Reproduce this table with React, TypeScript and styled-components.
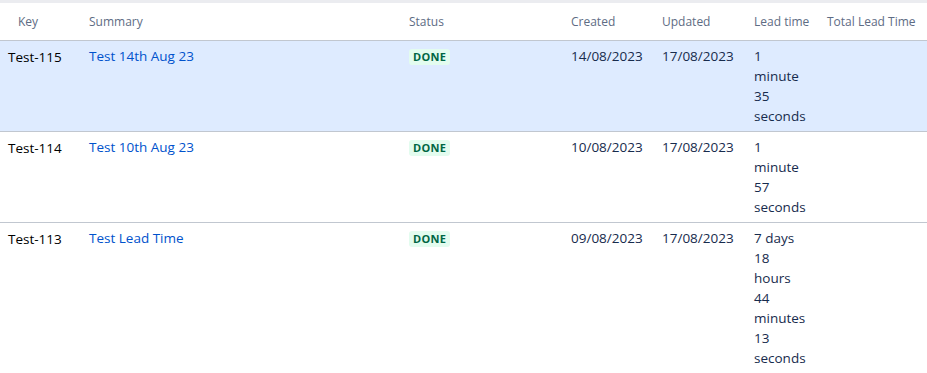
import React from 'react'
import styled, { createGlobalStyle } from 'styled-components'

const GlobalStyle = createGlobalStyle`
  html, body {
    margin: 0;
    padding: 0;
    background: #fff;
    font-family: 'Open Sans', 'Noto Sans', sans-serif;
  }
`

const Wrapper = styled.div`
  border-top: 3px solid #ebecf0;
  width: 927px;
`

const Table = styled.table`
  width: 927px;
  border-collapse: collapse;
  table-layout: fixed;
`

const HeadCell = styled.th<{ $indent?: number }>`
  height: 37px;
  padding: 0 0 0 ${(p) => p.$indent ?? 8}px;
  text-align: left;
  font-size: 12px;
  font-weight: 400;
  color: #5e6c84;
  white-space: nowrap;
  border-bottom: 1px solid #c1c7d0;
`

const Row = styled.tr<{ $selected?: boolean }>`
  background: ${(p) => (p.$selected ? '#deebff' : '#fff')};
  border-bottom: 1px solid #c1c7d0;
  &:last-child {
    border-bottom: none;
  }
`

const Cell = styled.td`
  vertical-align: top;
  padding: 5px 8px 5px 8px;
  font-size: 13.5px;
  line-height: 20px;
  color: #172b4d;
`

const KeyCell = styled(Cell)`
  padding-left: 8px;
  padding-top: 6px;
  color: #000;
`

const Link = styled.a`
  color: #0052cc;
  text-decoration: none;
`

const Lozenge = styled.span`
  display: inline-block;
  margin-top: 1px;
  padding: 0 4px;
  border-radius: 3px;
  background: #e3fcef;
  color: #006644;
  font-size: 11px;
  font-weight: 700;
  line-height: 16px;
  letter-spacing: 0.3px;
`

const LeadLines = styled.div`
  width: 53px;
`

type Issue = {
  key: string
  summary: string
  created: string
  updated: string
  lead: string
  selected?: boolean
}

const issues: Issue[] = [
  { key: 'Test-115', summary: 'Test 14th Aug 23', created: '14/08/2023', updated: '17/08/2023', lead: '1 minute 35 seconds', selected: true },
  { key: 'Test-114', summary: 'Test 10th Aug 23', created: '10/08/2023', updated: '17/08/2023', lead: '1 minute 57 seconds' },
  { key: 'Test-113', summary: 'Test Lead Time', created: '09/08/2023', updated: '17/08/2023', lead: '7 days 18 hours 44 minutes 13 seconds' },
]

export default function App() {
  return (
    <>
      <GlobalStyle />
      <Wrapper>
        <Table>
          <colgroup>
            <col style={{ width: 81 }} />
            <col style={{ width: 320 }} />
            <col style={{ width: 162 }} />
            <col style={{ width: 91 }} />
            <col style={{ width: 92 }} />
            <col style={{ width: 73 }} />
            <col style={{ width: 108 }} />
          </colgroup>
          <thead>
            <tr>
              <HeadCell $indent={18}>Key</HeadCell>
              <HeadCell>Summary</HeadCell>
              <HeadCell>Status</HeadCell>
              <HeadCell>Created</HeadCell>
              <HeadCell>Updated</HeadCell>
              <HeadCell>Lead time</HeadCell>
              <HeadCell>Total Lead Time</HeadCell>
            </tr>
          </thead>
          <tbody>
            {issues.map((it) => (
              <Row key={it.key} $selected={it.selected}>
                <KeyCell>{it.key}</KeyCell>
                <Cell>
                  <Link href="#">{it.summary}</Link>
                </Cell>
                <Cell>
                  <Lozenge>DONE</Lozenge>
                </Cell>
                <Cell>{it.created}</Cell>
                <Cell>{it.updated}</Cell>
                <Cell>
                  <LeadLines>{it.lead}</LeadLines>
                </Cell>
                <Cell />
              </Row>
            ))}
          </tbody>
        </Table>
      </Wrapper>
    </>
  )
}
